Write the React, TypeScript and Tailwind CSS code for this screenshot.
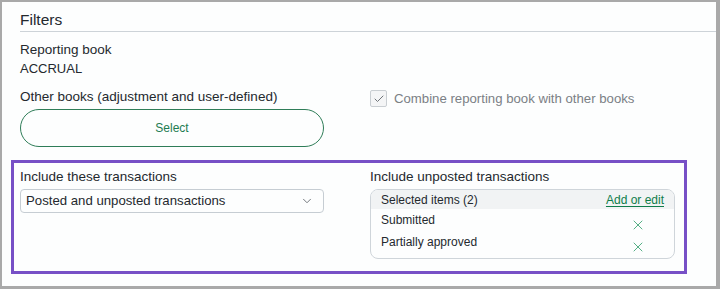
import { Check, ChevronDown, X } from 'lucide-react'

const SELECTED = ['Submitted', 'Partially approved']

export default function App() {
  return (
    <div className="w-[720px] h-[289px] overflow-hidden bg-[#fdfefe] border-t-2 border-l-2 border-r-4 border-b-[3px] border-[#a9a9a9] font-['Liberation_Sans',Arial,sans-serif] text-[#24292e]">
      {/* Header */}
      <div className="ml-[18px] pt-[8px] pb-px border-b border-[#cdd3d8]">
        <h2 className="text-[15.5px] leading-[20px]">Filters</h2>
      </div>

      <div className="pl-[18px]">
        <div className="mt-[10px] text-[13.5px] leading-4">Reporting book</div>
        <div className="mt-[3px] text-[13px] leading-4">ACCRUAL</div>

        <div className="mt-3 grid grid-cols-[350px_1fr]">
          <div>
            <div className="text-[13.5px] leading-4">Other books (adjustment and user-defined)</div>
            <button className="mt-1 w-[304px] h-[38px] rounded-full border border-[#2f7d58] text-[12px] text-[#1d7c52]">
              Select
            </button>
          </div>
          <div className="flex items-start gap-[7px] pt-px">
            <span className="w-[17px] h-[17px] rounded-[2px] border border-[#c9ced2] bg-[#f4f5f6] flex items-center justify-center">
              <Check className="w-[12px] h-[12px] text-[#6f7479]" strokeWidth={2} />
            </span>
            <span className="text-[13.2px] leading-[17px] text-[#7b8085]">Combine reporting book with other books</span>
          </div>
        </div>
      </div>

      {/* Highlighted section */}
      <div className="mt-[13px] ml-[9px] w-[676px] h-[114px] border-[3px] border-[#7750c6] pl-[6px] pt-[6px]">
        <div className="grid grid-cols-[350px_305px]">
          <div>
            <div className="text-[13.5px] leading-4">Include these transactions</div>
            <div className="mt-1 w-[304px] h-[24px] rounded-[4px] border border-[#c6cdd3] flex items-center justify-between pl-[5px] pr-[9px]">
              <span className="text-[13.2px] leading-[22px]">Posted and unposted transactions</span>
              <ChevronDown className="w-[14px] h-[14px] text-[#6b7075]" strokeWidth={1.6} />
            </div>
          </div>
          <div>
            <div className="text-[13.5px] leading-4">Include unposted transactions</div>
            <div className="mt-1 h-[70px] rounded-[8px] border border-[#cfd5da] overflow-hidden">
              <div className="h-[19px] bg-[#f1f3f4] flex items-center justify-between px-[10px] text-[12px]">
                <span className="leading-[19px] pt-px">Selected items (2)</span>
                <span className="leading-[19px] pt-px text-[#0f7d4b] underline underline-offset-[2px] decoration-[#0f7d4b]">Add or edit</span>
              </div>
              {SELECTED.map(item => (
                <div key={item} className="h-[22px] flex items-start justify-between pl-[10px] pr-[28px]">
                  <span className="text-[12px] leading-[22px]">{item}</span>
                  <X className="mt-[8px] w-[16px] h-[16px] text-[#3aa272]" strokeWidth={1.3} />
                </div>
              ))}
            </div>
          </div>
        </div>
      </div>
    </div>
  )
}
